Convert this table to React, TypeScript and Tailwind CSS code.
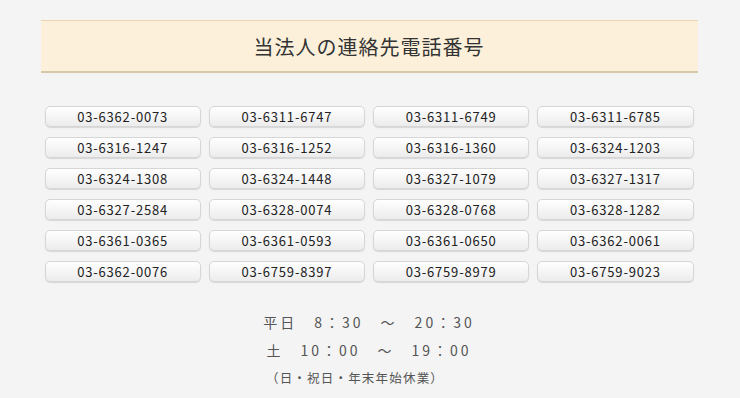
const numbers = [
  "03-6362-0073", "03-6311-6747", "03-6311-6749", "03-6311-6785",
  "03-6316-1247", "03-6316-1252", "03-6316-1360", "03-6324-1203",
  "03-6324-1308", "03-6324-1448", "03-6327-1079", "03-6327-1317",
  "03-6327-2584", "03-6328-0074", "03-6328-0768", "03-6328-1282",
  "03-6361-0365", "03-6361-0593", "03-6361-0650", "03-6362-0061",
  "03-6362-0076", "03-6759-8397", "03-6759-8979", "03-6759-9023",
];

export default function App() {
  return (
    <div className="min-h-[398px] w-full bg-[#f4f4f4] pt-[20px] font-['Noto_Sans_CJK_JP',sans-serif]">
      <div className="mx-auto w-[657px] translate-x-[-1px]">
        {/* title band */}
        <div className="flex h-[53px] items-center justify-center border-t border-[#ead6b2] border-b-2 border-b-[#d8c9a6] bg-[#fcf0da]">
          <h1 className="mt-[1px] text-[20px] font-normal tracking-[1px] text-[#333]">当法人の連絡先電話番号</h1>
        </div>

        {/* number buttons */}
        <div className="mt-[33px] grid grid-cols-4 gap-x-[8px] gap-y-[10px] px-[4px]">
          {numbers.map((n) => (
            <a
              key={n}
              href={`tel:${n}`}
              className="flex h-[21px] items-center justify-center rounded-[5px] border border-[#d6d6d6] bg-gradient-to-b from-white to-[#ececec] text-[13px] leading-none tracking-[0.8px] text-[#222] shadow-[0_1px_1px_rgba(0,0,0,0.12)]"
            >
              {n}
            </a>
          ))}
        </div>

        {/* business hours */}
        <div className="mt-[26px] flex flex-col items-center text-[#555]">
          <p className="text-[14px] leading-[28px] tracking-[3px]">平日　8：30　～　20：30</p>
          <p className="text-[14px] leading-[28px] tracking-[3px]">土　10：00　～　19：00</p>
          <p className="mr-[28px] text-[12.5px] leading-[28px] tracking-[1.2px]">（日・祝日・年末年始休業）</p>
        </div>
      </div>
    </div>
  );
}
